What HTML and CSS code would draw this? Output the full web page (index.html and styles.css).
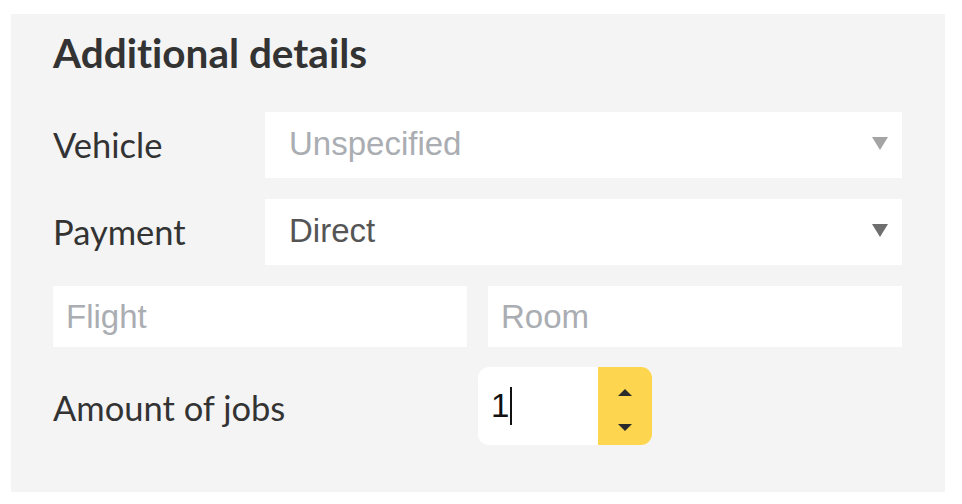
FILE: index.html
```html
<!DOCTYPE html>
<html lang="en">
<head>
<meta charset="utf-8">
<title>Additional details</title>
<link rel="stylesheet" href="styles.css">
</head>
<body>
<section class="panel">
  <h2 class="title">Additional details</h2>
  <div class="form">
    <div class="row">
      <span class="label">Vehicle</span>
      <div class="select placeholder">
        <span class="value">Unspecified</span>
        <svg class="caret light" width="16" height="13" viewBox="0 0 16 13"><path d="M0 0H16L8 13Z"/></svg>
      </div>
    </div>
    <div class="row">
      <span class="label">Payment</span>
      <div class="select">
        <span class="value">Direct</span>
        <svg class="caret" width="16" height="13" viewBox="0 0 16 13"><path d="M0 0H16L8 13Z"/></svg>
      </div>
    </div>
    <div class="pair">
      <div class="field placeholder">Flight</div>
      <div class="field placeholder">Room</div>
    </div>
    <div class="amount">
      <span class="label">Amount of jobs</span>
      <div class="number">
        <div class="number-value"><span>1</span><span class="cursor"></span></div>
        <div class="spinner">
          <svg width="14" height="7" viewBox="0 0 14 7"><path d="M0 7L7 0L14 7Z"/></svg>
          <svg width="14" height="7" viewBox="0 0 14 7"><path d="M0 0H14L7 7Z"/></svg>
        </div>
      </div>
    </div>
  </div>
</section>
</body>
</html>
```

FILE: styles.css
```css
html, body {
  margin: 0;
  padding: 0;
  background: #ffffff;
}

.panel {
  box-sizing: border-box;
  width: 934px;
  height: 478px;
  margin: 14px 0 0 11px;
  padding: 15px 43px 0 42px;
  background: #f4f4f4;
  font-family: Lato, "Open Sans", sans-serif;
  font-variant-ligatures: none;
  color: #333333;
}

.title {
  margin: 0 0 35px 0;
  font-size: 40.5px;
  font-weight: 700;
  line-height: 48px;
  color: #333333;
}

.form {
  display: flex;
  flex-direction: column;
  gap: 21px;
}

.row {
  display: grid;
  grid-template-columns: 212px 1fr;
  align-items: center;
}

.label {
  font-size: 34.5px;
  line-height: 40px;
  color: #333333;
}

.select {
  height: 66px;
  background: #ffffff;
  display: flex;
  align-items: center;
  justify-content: space-between;
  padding: 0 14px 0 24px;
  font-family: "Liberation Sans", Arial, sans-serif;
  font-size: 33px;
  color: #555555;
}

.select .value {
  line-height: 36px;
  padding-bottom: 3px;
}

.caret {
  fill: #6e6e6e;
  margin-bottom: 4px;
}

.caret.light {
  fill: #a4a4a4;
}

.placeholder {
  color: #aaadb2;
}

.pair {
  display: grid;
  grid-template-columns: 1fr 1fr;
  gap: 21px;
}

.field {
  height: 61px;
  background: #ffffff;
  display: flex;
  align-items: center;
  padding: 0 13px;
  font-family: "Liberation Sans", Arial, sans-serif;
  font-size: 33px;
  line-height: 36px;
}

.amount {
  display: flex;
  align-items: center;
  margin-top: -1px;
}

.amount .label {
  width: 425px;
  padding-top: 4px;
}

.number {
  display: flex;
  width: 174px;
  height: 78px;
  border-radius: 11px;
  overflow: hidden;
  background: #ffffff;
}

.number-value {
  flex: 1;
  display: flex;
  align-items: center;
  padding-left: 13px;
  font-family: "Liberation Sans", Arial, sans-serif;
  font-size: 33px;
  color: #111111;
}

.cursor {
  display: inline-block;
  width: 2px;
  height: 38px;
  margin-left: 1px;
  background: #111111;
}

.spinner {
  width: 54px;
  background: #fdd54f;
  display: flex;
  flex-direction: column;
  align-items: center;
  justify-content: center;
  gap: 28px;
  padding-top: 7px;
  box-sizing: border-box;
}

.spinner svg {
  fill: #2b2b2b;
}
```
